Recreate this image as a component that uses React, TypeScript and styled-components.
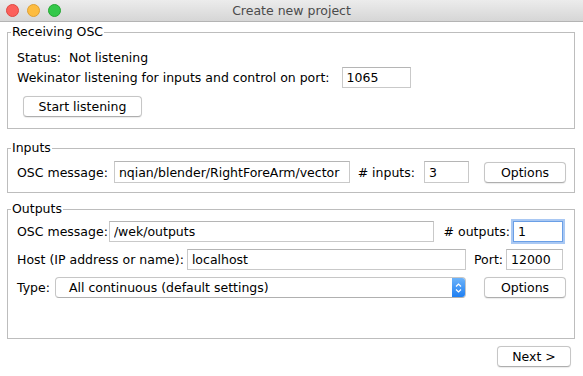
import styled, { createGlobalStyle } from 'styled-components';

const FONT = '"DejaVu Sans", "Liberation Sans", Arial, sans-serif';

const GlobalStyle = createGlobalStyle`
  html, body {
    margin: 0;
    padding: 0;
    background: #ffffff;
  }
  body {
    font-family: ${FONT};
    font-size: 12.5px;
    color: #000000;
  }
`;

const Window = styled.div`
  width: 583px;
  height: 376px;
  background: #ffffff;
  display: flex;
  flex-direction: column;
  overflow: hidden;
`;

const TitleBar = styled.div`
  height: 21px;
  flex: none;
  display: flex;
  align-items: center;
  background: linear-gradient(#ececec, #d6d6d6);
  border-bottom: 1px solid #b4b4b4;
  position: relative;
`;

const Lights = styled.div`
  display: flex;
  gap: 8px;
  padding-left: 6px;
`;

const Light = styled.span<{ $fill: string; $edge: string }>`
  width: 11px;
  height: 11px;
  border-radius: 50%;
  background: ${(p) => p.$fill};
  border: 0.5px solid ${(p) => p.$edge};
`;

const Title = styled.div`
  position: absolute;
  left: 0;
  right: 0;
  top: 0;
  bottom: 0;
  display: flex;
  align-items: center;
  justify-content: center;
  color: #4b4b4b;
  font-size: 12.5px;
  pointer-events: none;
`;

const Content = styled.div`
  flex: 1;
  display: flex;
  flex-direction: column;
  padding: 2px 8px 0 7px;
`;

const Group = styled.fieldset<{ $top?: number; $bottom: number; $padTop: number }>`
  margin: ${(p) => p.$top ?? 0}px 0 0 0;
  padding: ${(p) => p.$padTop}px 8px ${(p) => p.$bottom}px 9px;
  border: 1px solid #bdbdbd;
  min-width: 0;
  display: flex;
  flex-direction: column;
`;

const Legend = styled.legend`
  padding: 0 1px;
  margin-left: -6px;
  font-size: 12.5px;
  line-height: 16px;
`;

const Row = styled.div<{ $h?: number; $mt?: number }>`
  display: flex;
  align-items: center;
  height: ${(p) => p.$h ?? 21}px;
  margin-top: ${(p) => p.$mt ?? 0}px;
`;

const Label = styled.span<{ $ml?: number }>`
  white-space: nowrap;
  margin-left: ${(p) => p.$ml ?? 0}px;
  flex: none;
`;

const Field = styled.input<{ $w?: number; $h?: number; $ml?: number; $mr?: number; $focus?: boolean }>`
  box-sizing: border-box;
  height: ${(p) => p.$h ?? 21}px;
  width: ${(p) => (p.$w ? `${p.$w}px` : 'auto')};
  flex: ${(p) => (p.$w ? 'none' : '1')};
  min-width: 0;
  margin: 0 ${(p) => p.$mr ?? 0}px 0 ${(p) => p.$ml ?? 0}px;
  padding: 0 0 0 4px;
  font-family: ${FONT};
  font-size: 12.5px;
  color: #000;
  background: #fff;
  border: 1px solid ${(p) => (p.$focus ? '#6a9fe6' : '#c9c9c9')};
  border-top-color: ${(p) => (p.$focus ? '#6a9fe6' : '#b5b5b5')};
  box-shadow: ${(p) => (p.$focus ? '0 0 0 2px #a9c8f3' : 'none')};
  outline: none;
  border-radius: 0;
`;

const Button = styled.button<{ $w: number; $ml?: number }>`
  box-sizing: border-box;
  width: ${(p) => p.$w}px;
  height: 21px;
  flex: none;
  margin-left: ${(p) => p.$ml ?? 0}px;
  padding: 0;
  font-family: ${FONT};
  font-size: 12.5px;
  color: #000;
  background: #ffffff;
  border: 1px solid #c6c6c6;
  border-bottom-color: #aeaeae;
  border-radius: 4px;
  box-shadow: 0 0.5px 1px rgba(0, 0, 0, 0.08);
`;

const Select = styled.div`
  flex: 1;
  height: 21px;
  box-sizing: border-box;
  margin-left: 5px;
  display: flex;
  align-items: center;
  background: #fff;
  border: 1px solid #c6c6c6;
  border-bottom-color: #b0b0b0;
  border-radius: 4px;
  overflow: hidden;
`;

const SelectText = styled.span`
  flex: 1;
  padding-left: 13px;
  white-space: nowrap;
`;

const Stepper = styled.span`
  width: 13px;
  align-self: stretch;
  display: flex;
  align-items: center;
  justify-content: center;
  background: linear-gradient(#6cb3fa, #1f7ff2);
`;

const Footer = styled.div`
  display: flex;
  justify-content: flex-end;
  padding: 7px 4px 0 0;
`;

export default function App() {
  return (
    <Window>
      <GlobalStyle />
      <TitleBar>
        <Lights>
          <Light $fill="#fc605b" $edge="#de4841" />
          <Light $fill="#fdbc40" $edge="#dea034" />
          <Light $fill="#34c84a" $edge="#24a732" />
        </Lights>
        <Title>Create new project</Title>
      </TitleBar>
      <Content>
        <Group $padTop={7} $bottom={11}>
          <Legend>Receiving OSC</Legend>
          <Row $h={20}>
            <Label>Status:&nbsp; Not listening</Label>
          </Row>
          <Row>
            <Label>Wekinator listening for inputs and control on port:</Label>
            <Field $w={69} $ml={12} defaultValue="1065" />
          </Row>
          <Row $mt={8}>
            <Button $w={119} $ml={6}>Start listening</Button>
          </Row>
        </Group>

        <Group $top={11} $padTop={5} $bottom={9}>
          <Legend>Inputs</Legend>
          <Row $h={22}>
            <Label>OSC message:</Label>
            <Field $ml={6} $h={22} defaultValue="nqian/blender/RightForeArm/vector" />
            <Label $ml={8}># inputs:</Label>
            <Field $w={45} $h={22} $ml={9} defaultValue="3" />
            <Button $w={82} $ml={15}>Options</Button>
          </Row>
        </Group>

        <Group $top={8} $padTop={4} $bottom={40}>
          <Legend>Outputs</Legend>
          <Row>
            <Label>OSC message:</Label>
            <Field $ml={1} defaultValue="/wek/outputs" />
            <Label $ml={10}># outputs:</Label>
            <Field $w={50} $ml={3} $mr={3} $focus defaultValue="1" />
          </Row>
          <Row $mt={7}>
            <Label>Host (IP address or name):</Label>
            <Field $ml={3} defaultValue="localhost" />
            <Label $ml={8}>Port:</Label>
            <Field $w={57} $ml={3} $mr={3} defaultValue="12000" />
          </Row>
          <Row $mt={7}>
            <Label>Type:</Label>
            <Select>
              <SelectText>All continuous (default settings)</SelectText>
              <Stepper>
                <svg width="7" height="12" viewBox="0 0 7 12">
                  <path d="M1 4.5 L3.5 2 L6 4.5 M1 7.5 L3.5 10 L6 7.5" fill="none" stroke="#ffffff" strokeWidth="1.2" />
                </svg>
              </Stepper>
            </Select>
            <Button $w={82} $ml={18}>Options</Button>
          </Row>
        </Group>

        <Footer>
          <Button $w={74}>Next &gt;</Button>
        </Footer>
      </Content>
    </Window>
  );
}
